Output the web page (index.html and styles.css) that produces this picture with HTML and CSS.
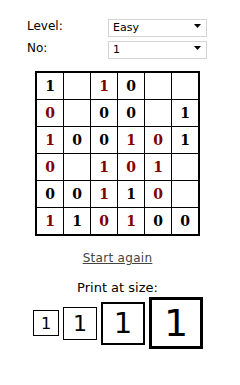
FILE: index.html
```html
<!DOCTYPE html>
<html lang="en">
<head>
    <meta charset="UTF-8">
    <title>Binary Puzzle</title>
    <link rel="stylesheet" href="styles.css">
</head>
<body>
    <div class="page">
        <div class="controls">
            <label for="level">Level:</label>
            <div class="select-wrap">
                <select id="level">
                    <option>Easy</option>
                    <option>Medium</option>
                    <option>Hard</option>
                </select>
                <svg class="arrow" width="7" height="4" viewBox="0 0 7 4"><path d="M0 0H7L3.5 4Z"/></svg>
            </div>
            <label for="number">No:</label>
            <div class="select-wrap">
                <select id="number">
                    <option>1</option>
                    <option>2</option>
                    <option>3</option>
                </select>
                <svg class="arrow" width="7" height="4" viewBox="0 0 7 4"><path d="M0 0H7L3.5 4Z"/></svg>
            </div>
        </div>

        <table class="board">
            <tr><td>1</td><td></td><td class="given">1</td><td>0</td><td></td><td></td></tr>
            <tr><td class="given">0</td><td></td><td>0</td><td>0</td><td></td><td>1</td></tr>
            <tr><td class="given">1</td><td>0</td><td>0</td><td class="given">1</td><td class="given">0</td><td>1</td></tr>
            <tr><td class="given">0</td><td></td><td class="given">1</td><td class="given">0</td><td class="given">1</td><td></td></tr>
            <tr><td>0</td><td>0</td><td class="given">1</td><td>1</td><td class="given">0</td><td></td></tr>
            <tr><td class="given">1</td><td>1</td><td class="given">0</td><td class="given">1</td><td>0</td><td>0</td></tr>
        </table>

        <a href="#" class="again">Start again</a>

        <div class="print-label">Print at size:</div>
        <div class="sizes">
            <a href="#" class="size size-1">1</a>
            <a href="#" class="size size-2">1</a>
            <a href="#" class="size size-3">1</a>
            <a href="#" class="size size-4">1</a>
        </div>
    </div>
</body>
</html>
```

FILE: styles.css
```css
body {
    font-family: "DejaVu Sans", Verdana, sans-serif;
    background-color: #fff;
    color: #000;
    margin: 0;
    padding: 0;
}

.page {
    width: 235px;
    text-align: center;
}

.controls {
    display: grid;
    grid-template-columns: 81px 99px;
    row-gap: 4px;
    align-items: center;
    padding: 16px 0 0 27px;
    text-align: left;
}

.controls label {
    font-size: 12px;
    padding-top: 2px;
}

.select-wrap {
    position: relative;
    height: 18px;
}

.select-wrap select {
    appearance: none;
    -webkit-appearance: none;
    width: 99px;
    height: 18px;
    margin: 0;
    padding: 0 0 0 4px;
    border: 1px solid #d4d4d4;
    border-radius: 0;
    background: #fff;
    font-family: "DejaVu Sans", Verdana, sans-serif;
    font-size: 11px;
    color: #000;
}

.select-wrap .arrow {
    position: absolute;
    right: 6px;
    top: 8px;
    fill: #000;
}

.board {
    border-collapse: collapse;
    border: 2px solid #000;
    margin: 15px auto 0;
}

.board td {
    width: 26px;
    height: 26px;
    padding: 0;
    border: 1px solid #000;
    text-align: center;
    vertical-align: middle;
    font-family: "DejaVu Serif", serif;
    font-weight: bold;
    font-size: 14px;
    line-height: 26px;
}

.board td.given {
    color: #800000;
}

.again {
    display: inline-block;
    margin-top: 14px;
    font-size: 12px;
    line-height: 16px;
    letter-spacing: 0.3px;
    color: #444;
}

.print-label {
    margin-top: 14px;
    font-size: 13px;
    line-height: 16px;
}

.sizes {
    display: flex;
    justify-content: center;
    align-items: center;
    gap: 4px;
    margin-top: 1px;
    padding-left: 1px;
}

.size {
    display: flex;
    align-items: center;
    justify-content: center;
    box-sizing: border-box;
    border: 1px solid #000;
    color: #000;
    text-decoration: none;
    background: #fff;
}

.size-1 {
    width: 26px;
    height: 26px;
    font-size: 16px;
}

.size-2 {
    width: 34px;
    height: 33px;
    font-size: 22px;
}

.size-3 {
    width: 44px;
    height: 43px;
    border-width: 2px;
    font-size: 29px;
}

.size-4 {
    width: 54px;
    height: 52px;
    border-width: 3px;
    font-size: 38px;
}
```
